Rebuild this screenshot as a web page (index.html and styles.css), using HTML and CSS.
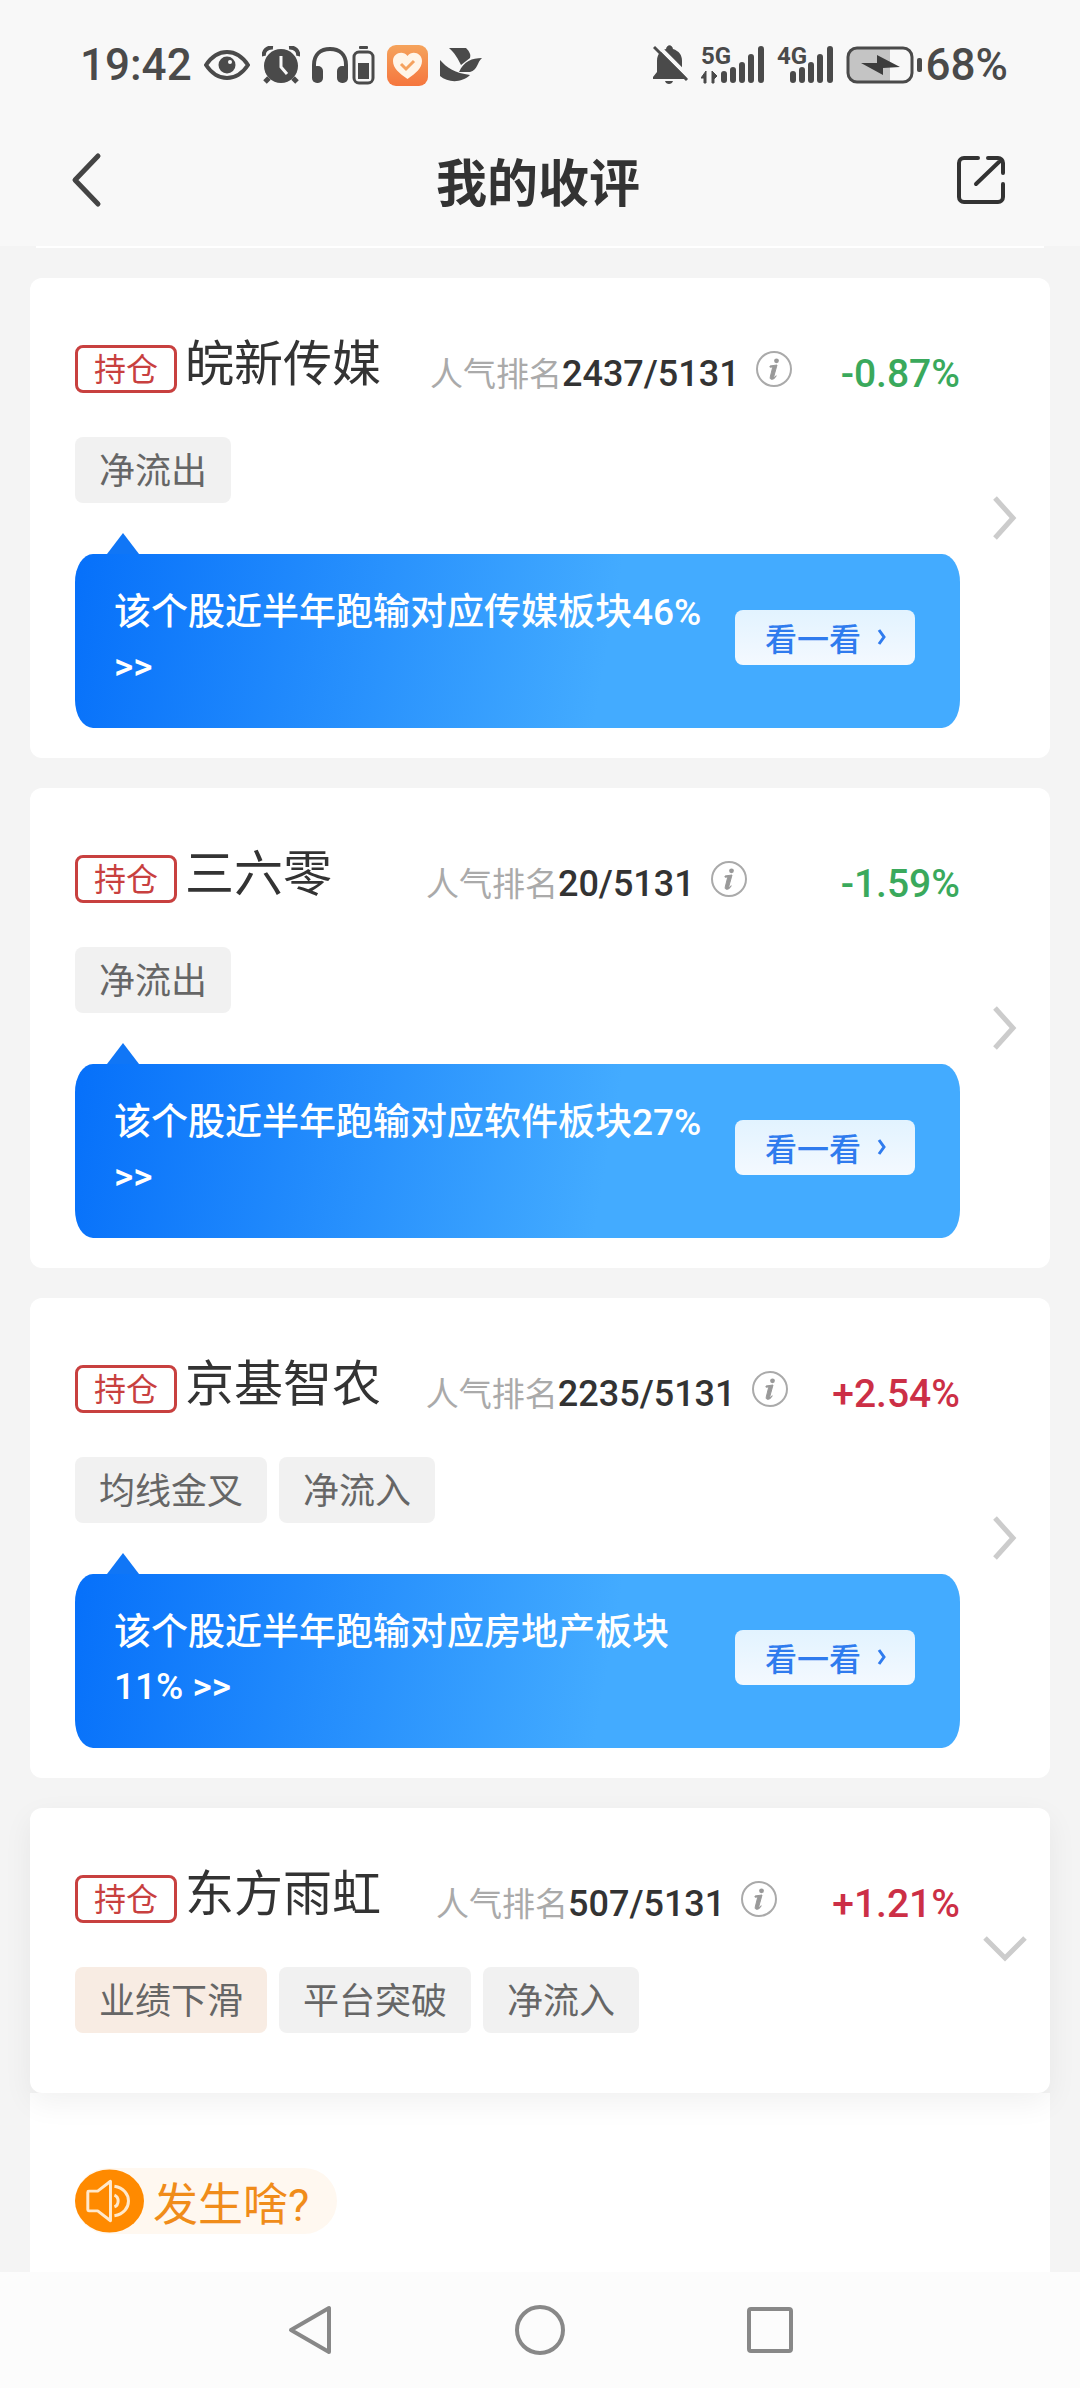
FILE: index.html
```html
<!DOCTYPE html>
<html lang="zh-CN">
<head>
    <meta charset="UTF-8">
    <meta name="viewport" content="width=device-width, initial-scale=1.0">
    <title>我的收评</title>
    <link rel="stylesheet" href="styles.css">
</head>
<body>

<!-- Shared icons -->
<svg class="sprite" aria-hidden="true">
    <symbol id="icon-info" viewBox="0 0 36 36">
        <circle cx="18" cy="18" r="17" fill="none" stroke="#aaa" stroke-width="2"/>
        <circle cx="20.5" cy="9.8" r="2.4" fill="#999"/>
        <path d="M14 15l7-1-3.200 11.500c-.3 1.200.6 1 2.400-.8-1.500 4-6.600 5-6 1.500l2.300-9.200c.2-.9-.8-1-2.500-.8z" fill="#999" stroke="#999"/>
    </symbol>
    <symbol id="icon-right" viewBox="0 0 24 44">
        <path d="M2 2l18 20L2 42" fill="none" stroke="#ccc" stroke-width="5"/>
    </symbol>
    <symbol id="icon-down" viewBox="0 0 44 26">
        <path d="M2 2l20 20L42 2" fill="none" stroke="#ccc" stroke-width="5"/>
    </symbol>
    <symbol id="icon-more" viewBox="0 0 10 16">
        <path d="M2 1l5 7-5 7" fill="none" stroke="#2f7bee" stroke-width="3"/>
    </symbol>
</svg>

<div class="app">
    <div class="status-bar">
        <div class="status-left">
            <span class="status-text">19:42</span>
            <!-- Eye -->
            <svg width="46" height="30" viewBox="0 0 46 30">
                <path d="M2 15C8 6 15 2 23 2s15 4 21 13c-6 9-13 13-21 13S8 24 2 15z" fill="none" stroke="#4a4a4a" stroke-width="4"/>
                <circle cx="23" cy="15" r="8.500" fill="#4a4a4a"/>
                <circle cx="26" cy="12" r="2" fill="#f8f8f8"/>
            </svg>
            <!-- Alarm -->
            <svg width="38" height="38" viewBox="0 0 38 38">
                <circle cx="19" cy="20" r="17" fill="#4a4a4a"/>
                <path d="M2 10C1 5 5 1 11 1.500M36 10c1-5-3-9-9-8.500" fill="none" stroke="#4a4a4a" stroke-width="4"/>
                <path d="M7 32l-4 4M31 32l4 4" stroke="#4a4a4a" stroke-width="5"/>
                <path d="M19 10v11l6 7" fill="none" stroke="#f8f8f8" stroke-width="3"/>
            </svg>
            <!-- Headphones with their battery -->
            <svg width="63" height="40" viewBox="0 0 63 40">
                <path d="M2 30V20C2 9 9 4 18 4s16 5 16 16v10" fill="none" stroke="#4a4a4a" stroke-width="4"/>
                <rect x="0" y="21" width="11" height="17" rx="5" fill="#4a4a4a"/>
                <rect x="25" y="21" width="11" height="17" rx="5" fill="#4a4a4a"/>
                <rect x="47" y="1" width="9" height="3" rx="1" fill="#4a4a4a"/>
                <rect x="42" y="7" width="19" height="31" rx="5" fill="none" stroke="#4a4a4a" stroke-width="3"/>
                <rect x="46" y="18" width="11" height="16" fill="#4a4a4a"/>
            </svg>
            <!-- Health app -->
            <svg width="41" height="41" viewBox="0 0 41 41">
                <defs>
                    <linearGradient id="heartBg" x1="0" y1="0" x2="0" y2="1">
                        <stop offset="0" stop-color="#f5a35c"/>
                        <stop offset="1" stop-color="#f5763e"/>
                    </linearGradient>
                </defs>
                <rect width="41" height="41" rx="9" fill="url(#heartBg)"/>
                <path d="M20.500 34C12 28 6 23 6 16c0-8 10-11 14.500-5C25 5 35 8 35 16c0 7-6 12-14.500 18z" fill="#fff5e8"/>
                <path d="M14 19l5 5 8-8" fill="none" stroke="#f5a25e" stroke-width="3"/>
            </svg>
            <!-- Bird -->
            <svg width="42" height="34" viewBox="0 0 42 34">
                <path d="M9 0h17c4 4 5 7 4 10l-9 7C18 11 15 5 9 0z" fill="#4a4a4a"/>
                <path d="M0 12c7 8 15 13 30 15-8 8-22 8-30 1z" fill="#4a4a4a"/>
                <path d="M19 24c5-11 13-14 23-14-5 4-4 12-12 14z" fill="#4a4a4a"/>
            </svg>
        </div>
        <div class="status-right">
            <!-- Muted bell -->
            <svg width="36" height="40" viewBox="0 0 36 40">
                <path d="M0 34v-2l4-5V16C4 8 9 5 13 4c1-5 6-5 7 0 6 2 9 6 9 12v11l5 6v1zM12 36h8c-1 4-7 4-8 0z" fill="#4a4a4a"/>
                <path d="M4 0l32 32" stroke="#f8f8f8" stroke-width="4"/>
                <path d="M1 2l33 33" stroke="#4a4a4a" stroke-width="3"/>
            </svg>
            <!-- Signal 5G -->
            <svg width="64" height="52" viewBox="0 0 64 52">
                <text x="0" y="25" class="signal-label">5G</text>
                <path d="M0 39l5-7v12H3v-5zM16 37l-5-5v12h2v-4z" fill="#4a4a4a" stroke="#4a4a4a"/>
                <path d="M23 35v6M32 31v10M41 26v15M50 18v23M60 10v31" stroke="#4a4a4a" stroke-width="6" stroke-linecap="round"/>
            </svg>
            <!-- Signal 4G -->
            <svg width="57" height="52" viewBox="0 0 57 52">
                <text x="0" y="25" class="signal-label">4G</text>
                <path d="M16 35v6M25 31v10M34 26v15M43 18v23M53 10v31" stroke="#4a4a4a" stroke-width="6" stroke-linecap="round"/>
            </svg>
            <div class="battery">
                <!-- Charging battery -->
                <svg width="76" height="38" viewBox="0 0 76 38">
                    <path d="M10 2h34v34H10a8 8 0 0 1-8-8V10a8 8 0 0 1 8-8z" fill="#c4c4c4"/>
                    <rect x="2" y="2" width="64" height="34" rx="9" fill="none" stroke="#4a4a4a" stroke-width="3"/>
                    <path d="M15 17l16 0V9l23 12-17 1v7z" fill="#3c3c3c"/>
                    <rect x="71" y="12" width="5" height="14" rx="2" fill="#4a4a4a"/>
                </svg>
                <span class="status-text">68%</span>
            </div>
        </div>
    </div>

    <header class="title-bar">
        <button class="icon-btn" aria-label="返回">
            <svg width="34" height="56" viewBox="0 0 34 56">
                <path d="M28 4L5 28l23 24" fill="none" stroke="#444" stroke-width="5" stroke-linecap="round" stroke-linejoin="round"/>
            </svg>
        </button>
        <h1>我的收评</h1>
        <button class="icon-btn" aria-label="分享">
            <svg width="50" height="50" viewBox="0 0 50 50">
                <path d="M22 3H8a5 5 0 0 0-5 5v34a5 5 0 0 0 5 5h34a5 5 0 0 0 5-5V29M32 3h10a5 5 0 0 1 5 5v10M45 5L20 29" fill="none" stroke="#333" stroke-width="4" stroke-linecap="round"/>
            </svg>
        </button>
    </header>

    <main class="list">
        <div class="card-edge"></div> <!-- Bottom of the card scrolled under the title bar -->

        <section class="card">
            <div class="card-main">
                <div class="stock-row">
                    <div class="stock">
                        <span class="badge">持仓</span>
                        <h2>皖新传媒</h2>
                    </div>
                    <div class="rank">
                        <span class="rank-text">人气排名<b>2437/5131</b></span>
                        <button class="info-btn" aria-label="排名说明"><svg><use href="#icon-info"/></svg></button>
                    </div>
                    <span class="change down">-0.87%</span>
                </div>
                <div class="tags">
                    <span class="tag">净流出</span>
                </div>
                <div class="bubble">
                    <p>该个股近半年跑输对应传媒板块46% &gt;&gt;</p>
                    <button class="look-btn">看一看<svg><use href="#icon-more"/></svg></button>
                </div>
            </div>
            <a href="#" class="arrow" aria-label="查看皖新传媒"><svg class="arrow-right"><use href="#icon-right"/></svg></a>
        </section>

        <section class="card">
            <div class="card-main">
                <div class="stock-row">
                    <div class="stock">
                        <span class="badge">持仓</span>
                        <h2>三六零</h2>
                    </div>
                    <div class="rank">
                        <span class="rank-text">人气排名<b>20/5131</b></span>
                        <button class="info-btn" aria-label="排名说明"><svg><use href="#icon-info"/></svg></button>
                    </div>
                    <span class="change down">-1.59%</span>
                </div>
                <div class="tags">
                    <span class="tag">净流出</span>
                </div>
                <div class="bubble">
                    <p>该个股近半年跑输对应软件板块27% &gt;&gt;</p>
                    <button class="look-btn">看一看<svg><use href="#icon-more"/></svg></button>
                </div>
            </div>
            <a href="#" class="arrow" aria-label="查看三六零"><svg class="arrow-right"><use href="#icon-right"/></svg></a>
        </section>

        <section class="card">
            <div class="card-main">
                <div class="stock-row">
                    <div class="stock">
                        <span class="badge">持仓</span>
                        <h2>京基智农</h2>
                    </div>
                    <div class="rank">
                        <span class="rank-text">人气排名<b>2235/5131</b></span>
                        <button class="info-btn" aria-label="排名说明"><svg><use href="#icon-info"/></svg></button>
                    </div>
                    <span class="change up">+2.54%</span>
                </div>
                <div class="tags">
                    <span class="tag">均线金叉</span>
                    <span class="tag">净流入</span>
                </div>
                <div class="bubble">
                    <p>该个股近半年跑输对应房地产板块11% &gt;&gt;</p>
                    <button class="look-btn">看一看<svg><use href="#icon-more"/></svg></button>
                </div>
            </div>
            <a href="#" class="arrow" aria-label="查看京基智农"><svg class="arrow-right"><use href="#icon-right"/></svg></a>
        </section>

        <!-- Expanded stock -->
        <section class="card card-open">
            <div class="card-main">
                <div class="stock-row">
                    <div class="stock">
                        <span class="badge">持仓</span>
                        <h2>东方雨虹</h2>
                    </div>
                    <div class="rank">
                        <span class="rank-text">人气排名<b>507/5131</b></span>
                        <button class="info-btn" aria-label="排名说明"><svg><use href="#icon-info"/></svg></button>
                    </div>
                    <span class="change up">+1.21%</span>
                </div>
                <div class="tags">
                    <span class="tag tag-warn">业绩下滑</span>
                    <span class="tag">平台突破</span>
                    <span class="tag">净流入</span>
                </div>
            </div>
            <button class="arrow" aria-label="收起东方雨虹"><svg class="arrow-down"><use href="#icon-down"/></svg></button>
        </section>
        <section class="detail">
            <h3 class="detail-title">
                <svg width="69" height="66" viewBox="0 0 70 66">
                    <ellipse cx="35" cy="33" rx="35" ry="32" fill="#ff8a00"/>
                    <path d="M14 23h9l13-10v40L23 43h-9c-1 0-1-1-1-1V24s0-1 1-1z" fill="none" stroke="#ffe9cc" stroke-width="3" stroke-linejoin="round"/>
                    <path d="M40 27c5 2 5 10 0 12M40 18c19 3 19 27 0 30" fill="none" stroke="#ffe9cc" stroke-width="3"/>
                </svg>
                发生啥?
            </h3>
        </section>
    </main>

    <nav class="nav-bar">
        <button aria-label="后退">
            <svg width="46" height="52" viewBox="0 0 46 52">
                <path d="M42 4v44L4 26z" fill="none" stroke="#888" stroke-width="4" stroke-linejoin="round"/>
            </svg>
        </button>
        <button aria-label="主屏幕">
            <svg width="50" height="50" viewBox="0 0 50 50">
                <circle cx="25" cy="25" r="23" fill="none" stroke="#888" stroke-width="4"/>
            </svg>
        </button>
        <button aria-label="最近任务">
            <svg width="46" height="46" viewBox="0 0 46 46">
                <rect x="2" y="2" width="42" height="42" rx="2" fill="none" stroke="#888" stroke-width="4"/>
            </svg>
        </button>
    </nav>
</div>

</body>
</html>
```
FILE: styles.css
```css
* {
    box-sizing: border-box;
}

body {
    margin: 0;
    font-family: Roboto, 'Noto Sans CJK SC', sans-serif;
    background-color: #f4f4f4;
    color: #333;
}

h1, h2, h3, p {
    margin: 0;
}

button {
    padding: 0;
    border: none;
    background: none;
    font-family: inherit;
    cursor: pointer;
}

svg {
    display: block;
    flex: none;
}

.sprite {
    position: absolute;
    width: 0;
    height: 0;
}

.app {
    display: flex;
    flex-direction: column;
    height: 100vh;
}

/* Status bar */
.status-bar {
    display: flex;
    justify-content: space-between;
    align-items: center;
    flex: none;
    height: 120px;
    padding: 10px 72px 0 80px;
    background-color: #f8f8f8;
}

.status-left,
.status-right,
.battery {
    display: flex;
    align-items: center;
    gap: 12px;
}

.battery {
    gap: 4px;
}

.status-text {
    font-size: 44px;
    font-weight: 500;
    color: #4a4a4a;
}

.signal-label {
    font-size: 24px;
    font-weight: 700;
    fill: #4a4a4a;
}

/* Title bar */
.title-bar {
    display: flex;
    justify-content: space-between;
    align-items: center;
    flex: none;
    height: 126px;
    padding: 0 74px 6px 70px;
    background-color: #f8f8f8;
}

.title-bar h1 {
    font-size: 51px;
    font-weight: 700;
}

.icon-btn {
    display: flex;
    width: 50px;
}

/* Stock list */
.list {
    flex: 1;
    min-height: 0;
    overflow: hidden;
    padding: 0 30px;
}

.card-edge {
    height: 2px;
    margin: 0 6px 30px;
    background-color: white;
}

.card {
    display: flex;
    margin-bottom: 30px;
    padding: 56px 0 30px 45px;
    background-color: white;
    border-radius: 12px;
}

.card-main {
    flex: 1;
    min-width: 0;
}

.stock-row {
    display: flex;
    justify-content: space-between;
    align-items: center;
    height: 70px;
}

.stock {
    display: flex;
    align-items: center;
    gap: 8px;
}

.badge {
    width: 102px;
    height: 48px;
    border: 3px solid #c8403f;
    border-radius: 8px;
    font-size: 32px;
    line-height: 44px;
    text-align: center;
    color: #c8403f;
}

.stock h2 {
    padding-bottom: 8px;
    font-size: 49px;
    font-weight: 400;
    line-height: 54px;
}

.rank {
    display: flex;
    align-items: center;
    gap: 16px;
}

.rank-text {
    padding-top: 10px;
    font-size: 33px;
    line-height: 40px;
    color: #aaa;
}

.rank-text b {
    font-size: 36px;
    font-weight: 500;
    color: #333;
}

.info-btn svg {
    width: 36px;
    height: 36px;
}

.change {
    padding-top: 10px;
    font-size: 39px;
    font-weight: 500;
    line-height: 40px;
}

.down {
    color: #3aa95c;
}

.up {
    color: #cc2f46;
}

.tags {
    display: flex;
    gap: 12px;
    margin-top: 33px;
}

.tag {
    height: 66px;
    padding: 0 24px;
    border-radius: 8px;
    background-color: #f1f1f1;
    font-size: 36px;
    line-height: 70px;
    color: #666;
}

.tag-warn {
    background-color: #f8ece3;
}

/* Blue tip under the tags */
.bubble {
    position: relative;
    display: flex;
    align-items: center;
    justify-content: space-between;
    gap: 20px;
    height: 174px;
    margin-top: 51px;
    padding: 0 45px 8px 39px;
    border-radius: 18px / 28px;
    background: linear-gradient(100deg, #0670fa, #43abff 60%);
}

.bubble::before {
    content: '';
    position: absolute;
    left: 32px;
    bottom: 100%;
    border: 16px solid transparent;
    border-top: none;
    border-bottom: 21px solid #1076f6;
}

.bubble p {
    flex: 1;
    padding-top: 6px;
    font-size: 37px;
    font-weight: 500;
    line-height: 54px;
    color: white;
}

.look-btn {
    display: flex;
    align-items: center;
    gap: 16px;
    flex: none;
    width: 180px;
    height: 55px;
    padding-left: 30px;
    border-radius: 8px;
    background: linear-gradient(#e2f3ff, #f4f9ff);
    font-size: 32px;
    font-weight: 500;
    color: #2f7bee;
}

.look-btn svg {
    width: 10px;
    height: 16px;
}

.arrow {
    display: flex;
    justify-content: center;
    align-items: center;
    flex: none;
    width: 90px;
    margin: -26px 0 0;
}

.arrow-right {
    width: 24px;
    height: 44px;
}

.arrow-down {
    width: 44px;
    height: 26px;
}

/* Expanded card and its detail panel */
.card-open {
    position: relative;
    margin-bottom: 0;
    padding-bottom: 60px;
    box-shadow: 0 10px 30px rgba(0, 0, 0, 0.06);
}

.card-open .arrow {
    margin-top: 0;
}

.detail {
    min-height: 300px;
    padding: 75px 45px;
    background-color: white;
}

.detail-title {
    display: inline-flex;
    align-items: center;
    gap: 9px;
    height: 66px;
    padding-right: 28px;
    border-radius: 33px;
    background-color: #fff8f0;
    font-size: 45px;
    font-weight: 400;
    color: #f08c1a;
}

/* System navigation */
.nav-bar {
    display: flex;
    justify-content: center;
    flex: none;
    height: 116px;
    background-color: #fcfcfc;
}

.nav-bar button {
    display: flex;
    justify-content: center;
    align-items: center;
    width: 230px;
}
```
